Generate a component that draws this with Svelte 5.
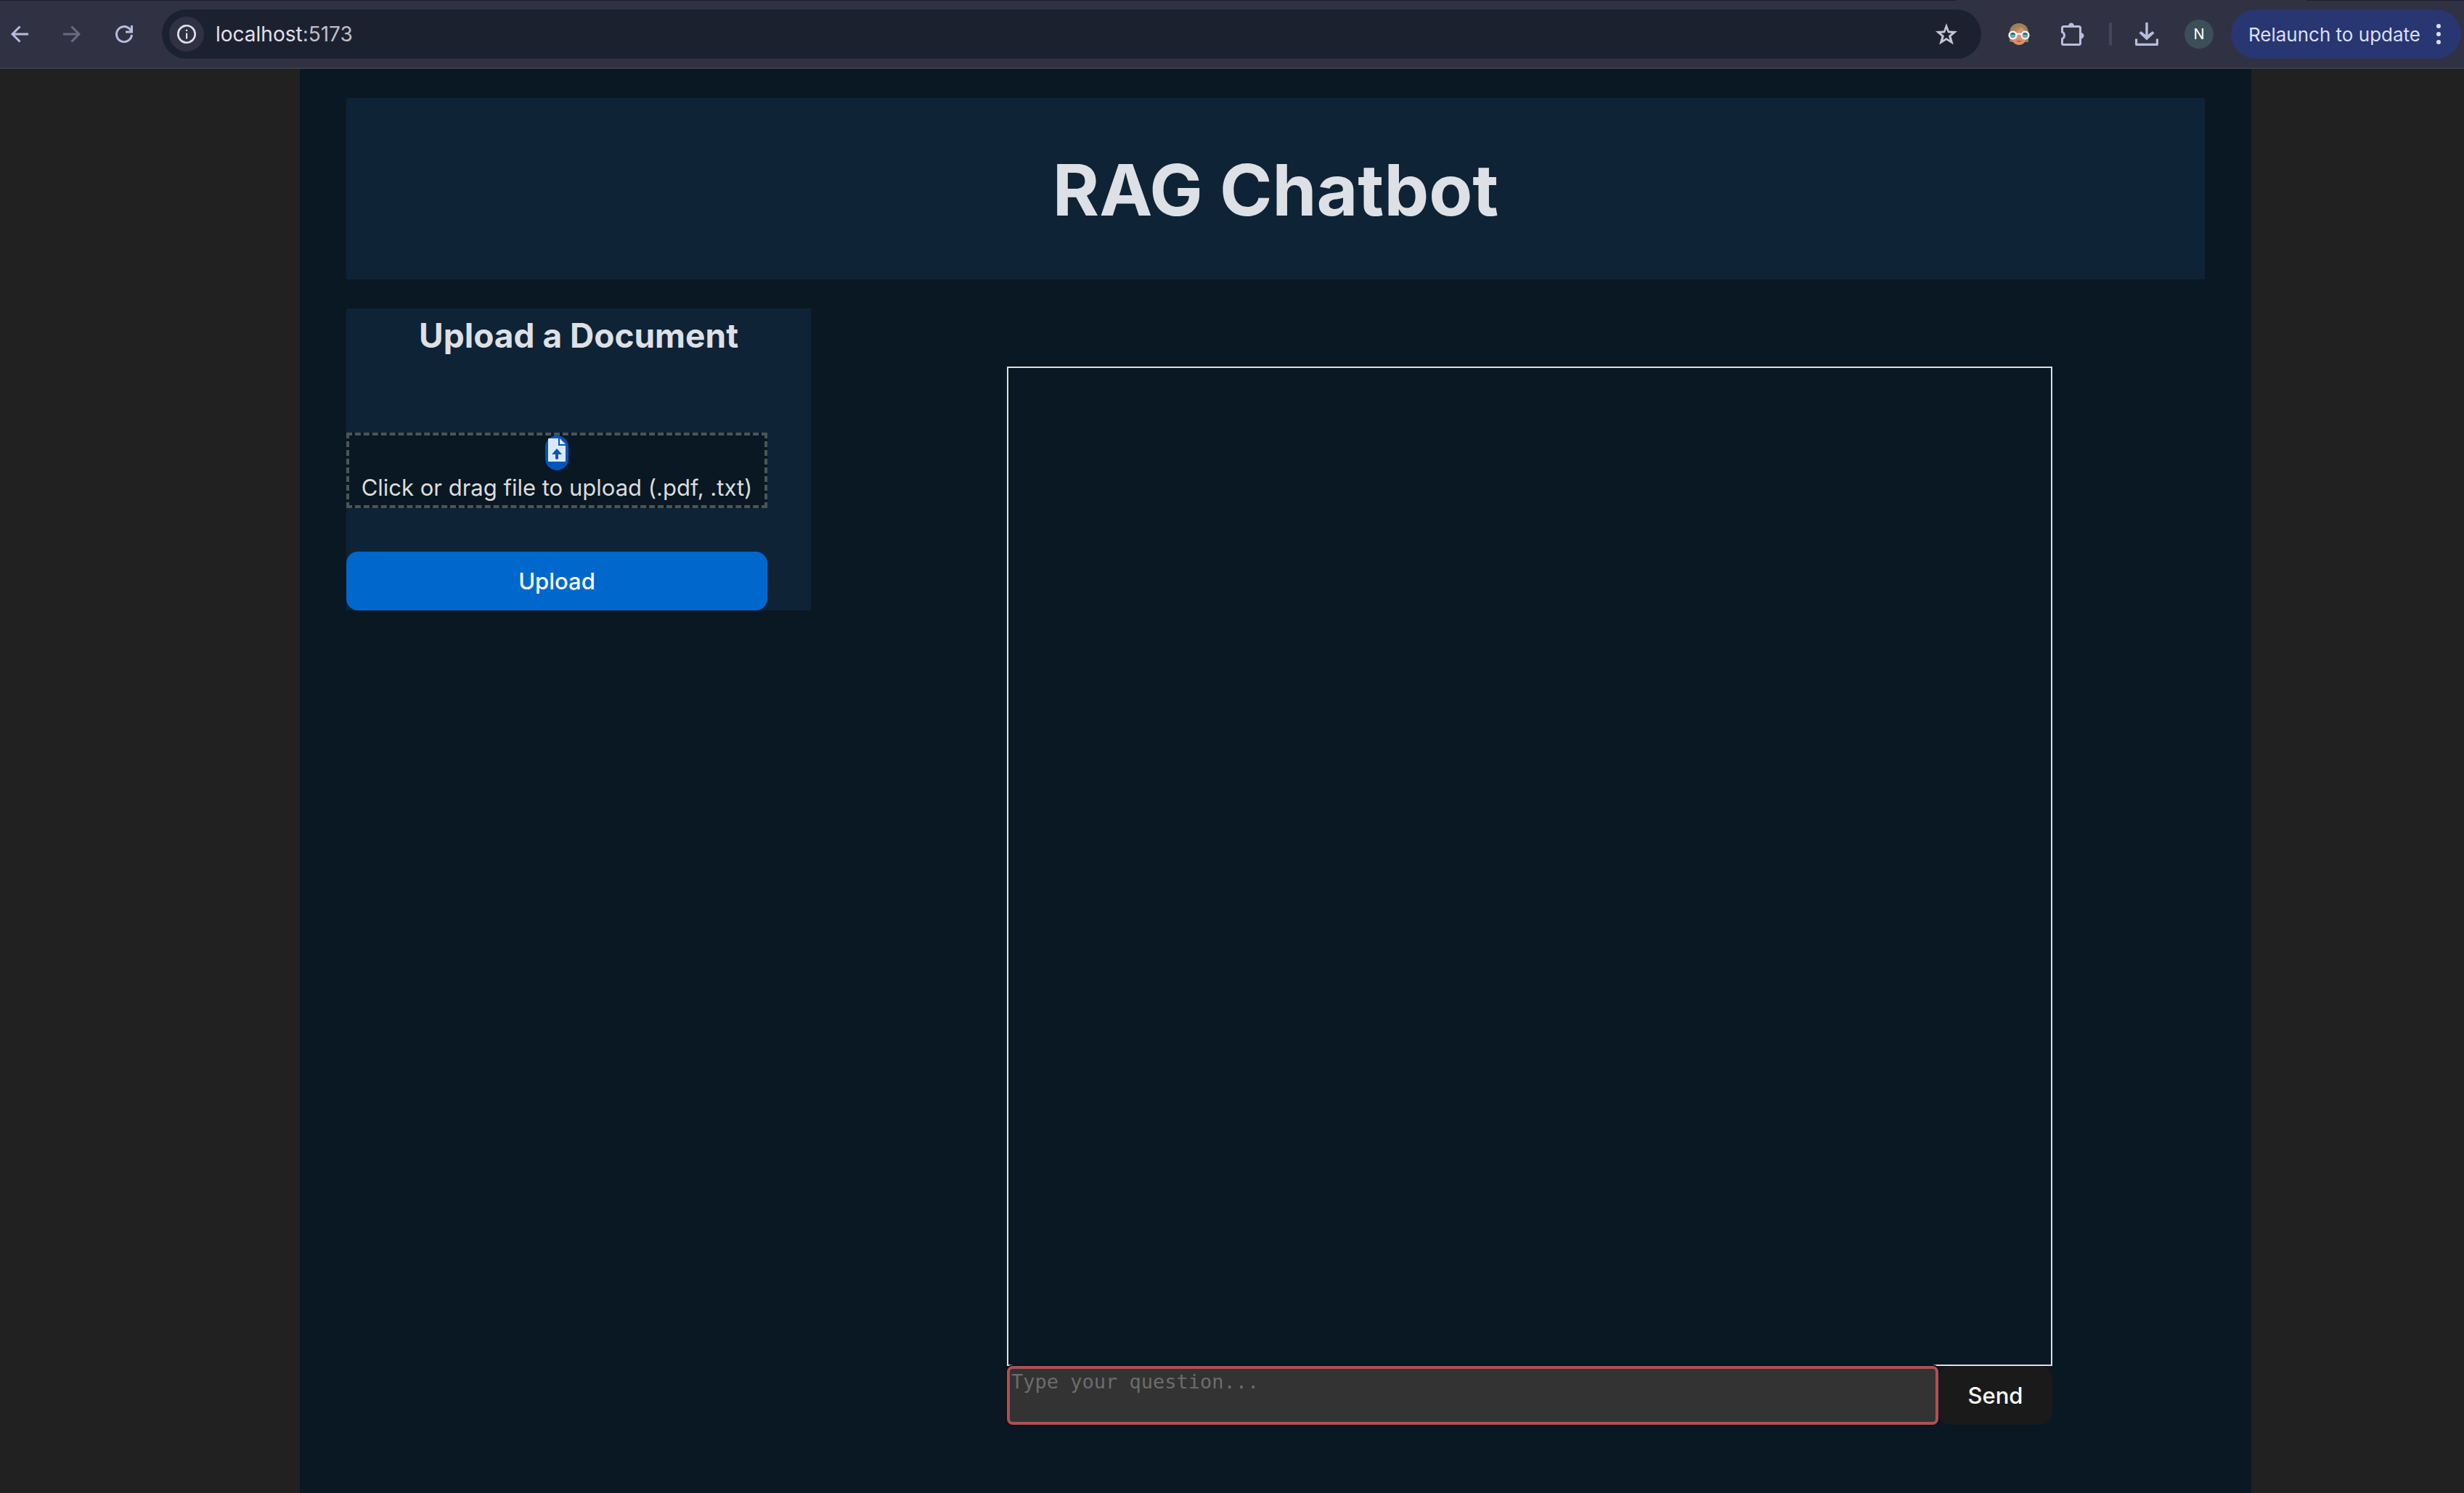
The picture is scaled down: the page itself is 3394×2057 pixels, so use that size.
<script>
  let question = $state('');
</script>

<div class="window">
  <div class="tabs"><span></span><span class="active"></span><span></span></div>
  <div class="toolbar">
    <nav class="nav" aria-label="Browser navigation">
      <button class="icon" aria-label="Back">
        <svg viewBox="0 0 24 24"><path d="M24 12H3M12.500 1.500L2 12l10.500 10.500" fill="none" stroke="#b9bbdf" stroke-width="3" /></svg>
      </button>
      <button class="icon" aria-label="Forward" disabled>
        <svg viewBox="0 0 24 24"><path d="M0 12h21M11.500 1.500L22 12 11.500 22.500" fill="none" stroke="#6a6b7e" stroke-width="3" /></svg>
      </button>
      <button class="icon" aria-label="Reload">
        <svg viewBox="0 0 24 24"><path d="M22.500 13A10.500 10.500 0 1 1 19.500 4.700L23 8.500M22.500 0v9H14" fill="none" stroke="#b9bbdf" stroke-width="3" /></svg>
      </button>
    </nav>

    <div class="address">
      <button class="info" aria-label="View site information">
        <svg viewBox="0 0 26 26"><circle cx="13" cy="13" r="11.700" fill="none" stroke="#e3e0ea" stroke-width="2.600" /><path d="M12 11.500h2.200v8H12zM12 6.800h2.200V9H12z" fill="#e3e0ea" /></svg>
      </button>
      <span class="url">localhost<span class="port">:5173</span></span>
      <button class="star" aria-label="Bookmark this tab">
        <svg viewBox="0 0 30 30"><path d="M15 0l3.800 10.500L30 11l-8.500 7.300 3.300 11.200L15 23.200l-9.800 6.300 3.300-11.200L0 11l11.200-.5zM15 8l-2 5.300-5.300.4 4.300 3.600-1.600 5.700 4.600-3 4.600 3-1.600-5.700 4.300-3.600-5.300-.4z" fill="#c6c5d2" fill-rule="evenodd" /></svg>
      </button>
    </div>

    <div class="tools">
      <button class="icon30" aria-label="Extension">
        <svg viewBox="0 0 30 30">
          <path d="M2 13C2 5 8 0 15 0s13 5 13 13v13h-4L5 26l-3-1z" fill="#9c8158" />
          <path d="M5 13l13-8 7 7v8c0 6-5 10-10 10S5 26 5 20z" fill="#dd8e6b" />
          <path d="M6 11C8 7 13 5 19 4l-3 4-9 5z" fill="#a88b5c" />
          <path d="M11 24.500q4-1.500 8 0-4 2.500-8 0z" fill="#b35d4b" />
          <circle cx="6.500" cy="16.500" r="5" fill="#6fa9b3" stroke="#fff" stroke-width="2.200" />
          <circle cx="23.500" cy="16.500" r="5" fill="#6fa9b3" stroke="#fff" stroke-width="2.200" />
          <path d="M3 15.500a4 4 0 0 1 7 0zM20 15.500a4 4 0 0 1 7 0z" fill="#2f4f5c" />
          <path d="M11.500 15.500q3.500-2 7 0" fill="none" stroke="#fff" stroke-width="2.200" />
        </svg>
      </button>
      <button class="icon32" aria-label="Extensions">
        <svg viewBox="0 0 32 32"><path d="M3.500 5.500h21a2 2 0 0 1 2 2V29a1.500 1.500 0 0 1-1.500 1.500H3A1.500 1.500 0 0 1 1.500 29v-6.500a5.200 5.200 0 0 0 0-9.400V7.500a2 2 0 0 1 2-2z" fill="none" stroke="#bcbce0" stroke-width="3" /><path d="M10 5a4 4.500 0 0 1 8 0zM27 14a4.500 4.200 0 0 1 0 8.400z" fill="#bcbce0" /></svg>
      </button>
      <span class="divider"></span>
      <button class="icon32" aria-label="Downloads">
        <svg viewBox="0 0 32 32"><path d="M16 0v20M1.500 22.500V29a1.500 1.500 0 0 0 1.500 1.500h26a1.500 1.500 0 0 0 1.500-1.500v-6.500" fill="none" stroke="#b9bbdf" stroke-width="3.400" /><path d="M5.500 14.500L8 12l8 6 8-6 2.500 2.500L16 24.500z" fill="#b9bbdf" /></svg>
      </button>
      <button class="profile" aria-label="Profile N">N</button>
      <button class="relaunch">
        <span>Relaunch to update</span>
        <svg viewBox="0 0 6 28" aria-hidden="true"><circle cx="3" cy="3" r="3" /><circle cx="3" cy="14" r="3" /><circle cx="3" cy="25" r="3" /></svg>
      </button>
    </div>
  </div>

  <div class="page">
    <main>
      <header><h1>RAG Chatbot</h1></header>
      <div class="columns">
        <section class="upload">
          <h2>Upload a Document</h2>
          <label class="drop">
            <input type="file" accept=".pdf,.txt" />
            <svg viewBox="0 0 32 48" aria-hidden="true">
              <rect width="32" height="48" rx="16" fill="#0056ba" />
              <path d="M5 4h13v10h10v21a1 1 0 0 1-1 1H5a1 1 0 0 1-1-1V5a1 1 0 0 1 1-1z" fill="#dce8f7" />
              <path d="M20 4l8 8h-8z" fill="#dce8f7" />
              <path d="M16 18l7 8h-5v5a2 2 0 0 1-4 0v-5H9z" fill="#0056ba" />
            </svg>
            <span>Click or drag file to upload (.pdf, .txt)</span>
          </label>
          <button class="submit">Upload</button>
        </section>

        <section class="chat" aria-label="Chat">
          <div class="messages"></div>
          <form onsubmit={(e) => e.preventDefault()}>
            <textarea bind:value={question} aria-label="Question" placeholder="Type your question..."></textarea>
            <button class="send">Send</button>
          </form>
        </section>
      </div>
    </main>
  </div>
</div>

<style>
  :global(body) {
    background: #212121;
  }
  .window {
    display: flex;
    flex-direction: column;
    min-height: 100vh;
    font-family: Inter, 'Liberation Sans', sans-serif;
    color: #dde0e5;
  }
  button {
    padding: 0;
    border: 0;
    background: none;
    font: inherit;
    color: inherit;
  }
  svg {
    display: block;
  }

  .tabs {
    display: grid;
    grid-template-columns: 2694fr 483fr 217fr;
    height: 1px;
    background: #1c2033;
  }
  .active {
    background: #303243;
  }
  .toolbar {
    display: flex;
    align-items: center;
    height: 92px;
    padding: 0 4px 0 15px;
    border-bottom: 2px solid #3d3e42;
    background: #303243;
    font-size: 28px;
  }
  .nav {
    display: flex;
    gap: 48px;
    margin-right: 40px;
  }
  .icon svg {
    width: 24px;
    height: 24px;
  }
  .address {
    flex: 1;
    display: flex;
    align-items: center;
    height: 68px;
    padding: 0 33px 0 10px;
    border-radius: 34px;
    background: #1c2130;
    box-sizing: border-box;
  }
  .info {
    display: grid;
    place-items: center;
    width: 48px;
    height: 48px;
    border-radius: 50%;
    background: #303243;
  }
  .info svg {
    width: 26px;
    height: 26px;
  }
  .url {
    flex: 1;
    padding-left: 16px;
    color: #e3e0ea;
  }
  .port {
    color: #bfbfc6;
  }
  .star svg,
  .icon30 svg {
    width: 30px;
    height: 30px;
  }
  .tools {
    display: flex;
    align-items: center;
  }
  .icon30 {
    margin: 0 43px 0 37px;
  }
  .icon32 svg {
    width: 32px;
    height: 32px;
  }
  .divider {
    width: 4px;
    height: 32px;
    margin: 0 32px 0 34px;
    border-radius: 2px;
    background: #45485c;
  }
  .profile {
    width: 40px;
    height: 40px;
    margin: 0 24px 0 36px;
    border-radius: 50%;
    background: #3b4f59;
    color: #fff;
    font-size: 20px;
    line-height: 40px;
  }
  .relaunch {
    display: flex;
    align-items: center;
    justify-content: space-between;
    gap: 22px;
    height: 68px;
    padding: 0 28px 0 24px;
    border-radius: 34px;
    background: #283671;
    color: #dcdffb;
    font-size: 26px;
  }
  .relaunch svg {
    width: 6px;
    height: 28px;
    fill: #dcdffb;
  }

  .page {
    flex: 1;
    display: flex;
    justify-content: center;
    padding-left: 120px;
  }
  main {
    width: 100%;
    max-width: 2560px;
    padding: 40px 64px 94px;
    background: #091823;
  }
  header {
    display: grid;
    place-items: center;
    box-sizing: border-box;
    height: 250px;
    padding-top: 4px;
    border-radius: 2px;
    background: #0e2336;
  }
  h1 {
    margin: 0;
    font-size: 98px;
    line-height: 112px;
    font-weight: 700;
  }
  .columns {
    display: grid;
    grid-template-columns: 1fr 3fr;
    align-items: start;
    margin-top: 40px;
  }
  .upload {
    background: #0e2336;
  }
  h2 {
    margin: 0 0 102px;
    padding-top: 5px;
    font-size: 46px;
    line-height: 64px;
    font-weight: 700;
    text-align: center;
  }
  .drop {
    position: relative;
    display: flex;
    flex-direction: column;
    align-items: center;
    box-sizing: border-box;
    height: 104px;
    margin-right: 60px;
    border: 4px dashed #4b5558;
    background: #091823;
    font-size: 31px;
    line-height: 48px;
    color: #dcdcdd;
    white-space: nowrap;
  }
  .drop input {
    position: absolute;
    inset: 0;
    width: 100%;
    opacity: 0;
  }
  .drop svg {
    width: 32px;
    height: 48px;
    flex: none;
  }
  .submit {
    display: block;
    width: calc(100% - 60px);
    height: 81px;
    margin-top: 60px;
    border-radius: 16px;
    background: #0067cc;
    color: #fff;
    font-size: 31px;
    font-weight: 500;
  }
  .chat {
    width: 75%;
    margin: 80px 210px 0 auto;
  }
  .messages {
    box-sizing: border-box;
    height: 1377px;
    border: 2px solid #dddfe1;
  }
  form {
    display: flex;
    height: 81px;
  }
  textarea {
    flex: 1;
    box-sizing: border-box;
    margin: 0;
    padding: 2px;
    border: 4px solid #b04f56;
    border-radius: 8px;
    outline: 0;
    background: #333;
    box-shadow: 0 0 0 2px #10100f;
    color: #fff;
    font: 27px/32px 'DejaVu Sans Mono', monospace;
    resize: none;
  }
  textarea::placeholder {
    color: #6c6c6c;
  }
  .send {
    width: 157px;
    border-radius: 16px;
    background: #1a1a1a;
    color: #fff;
    font-size: 31px;
    font-weight: 500;
  }
</style>
